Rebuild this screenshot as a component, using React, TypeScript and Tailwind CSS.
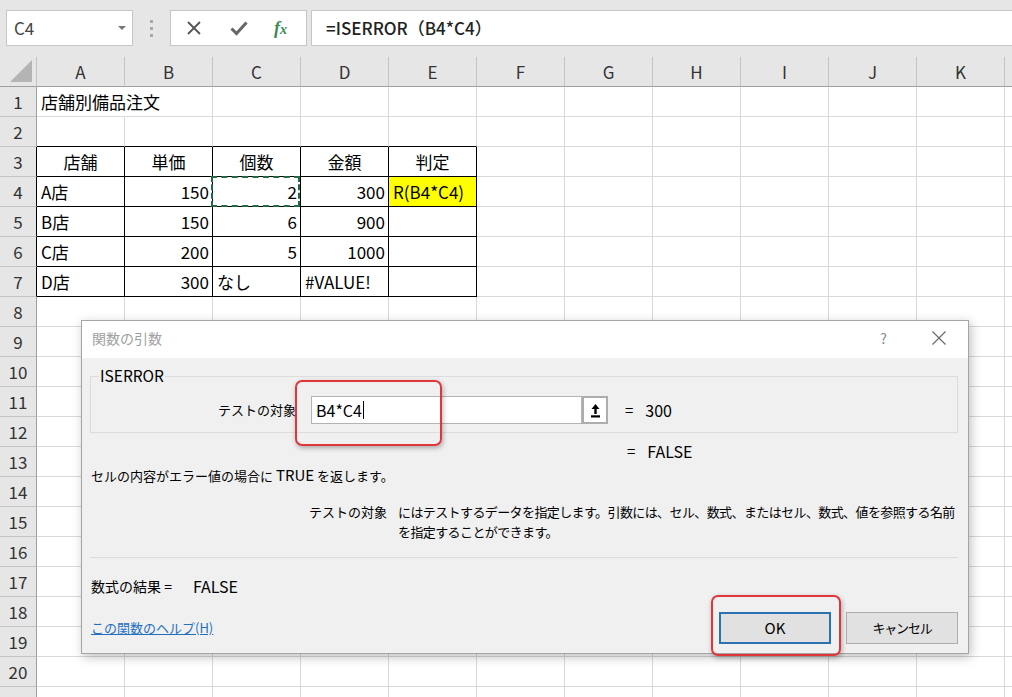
import { ReactNode } from "react";

const COLS = ["A", "B", "C", "D", "E", "F", "G", "H", "I", "J", "K", "L"];
const ROWS = Array.from({ length: 21 }, (_, i) => i + 1);

type Cell = { text: string; align: "l" | "r" | "c" };

const DATA: Record<string, Cell> = {
  A1: { text: "店舗別備品注文", align: "l" },
  A3: { text: "店舗", align: "c" },
  B3: { text: "単価", align: "c" },
  C3: { text: "個数", align: "c" },
  D3: { text: "金額", align: "c" },
  E3: { text: "判定", align: "c" },
  A4: { text: "A店", align: "l" },
  B4: { text: "150", align: "r" },
  C4: { text: "2", align: "r" },
  D4: { text: "300", align: "r" },
  E4: { text: "R(B4*C4)", align: "l" },
  A5: { text: "B店", align: "l" },
  B5: { text: "150", align: "r" },
  C5: { text: "6", align: "r" },
  D5: { text: "900", align: "r" },
  A6: { text: "C店", align: "l" },
  B6: { text: "200", align: "r" },
  C6: { text: "5", align: "r" },
  D6: { text: "1000", align: "r" },
  A7: { text: "D店", align: "l" },
  B7: { text: "300", align: "r" },
  C7: { text: "なし", align: "l" },
  D7: { text: "#VALUE!", align: "l" },
};

function SheetCell({ row, col }: { row: number; col: number }) {
  const key = COLS[col] + row;
  const cell = DATA[key];
  const inTable = col <= 4 && row >= 3 && row <= 7;
  const bottomBlack = col <= 4 && row >= 2 && row <= 7;
  const hideRight = key === "A1";

  const rightCls = hideRight
    ? "border-r-transparent"
    : inTable
    ? "border-r-black"
    : "border-r-[#d9d9d9]";
  const bottomCls = bottomBlack ? "border-b-black" : "border-b-[#d9d9d9]";
  const alignCls =
    cell?.align === "r"
      ? "justify-end pr-[3px]"
      : cell?.align === "c"
      ? "justify-center"
      : "justify-start pl-[4px]";

  return (
    <div
      className={`relative flex h-[30px] items-center border-r border-b text-[17px] leading-none text-black whitespace-nowrap ${rightCls} ${bottomCls} ${alignCls} ${
        key === "E4" ? "bg-[#ffff00]" : ""
      }`}
    >
      {cell && <span className="relative z-10">{cell.text}</span>}
      {key === "C4" && (
        <div className="absolute left-[-2px] top-[-1px] h-[31px] w-[89px] border-2 border-dashed border-[#1f6b45]" />
      )}
    </div>
  );
}

function RowHeader({ row }: { row: number }) {
  const black = row >= 3 && row <= 7;
  return (
    <div
      className={`flex h-[30px] items-center justify-center border-r border-b border-b-[#c4c4c4] bg-[#e6e6e6] text-[17px] leading-none text-[#333] ${
        black ? "border-r-black" : "border-r-[#9e9e9e]"
      }`}
    >
      {row}
    </div>
  );
}

function Toolbar() {
  return (
    <div className="flex h-[57px] items-start bg-[#e6e6e6] pt-[10px] pl-[6px]">
      <div className="flex h-[36px] w-[127px] items-center justify-between border border-[#c6c6c6] bg-white pl-[7px] pr-[6px] text-[17px] text-[#444]">
        <span>C4</span>
        <svg width="8" height="5" viewBox="0 0 8 5">
          <path d="M0 0h8L4 4z" fill="#777" />
        </svg>
      </div>
      <div className="ml-[17px] flex h-[36px] flex-col justify-center gap-[4px]">
        <span className="h-[3px] w-[3px] bg-[#a8a8a8]" />
        <span className="h-[3px] w-[3px] bg-[#a8a8a8]" />
        <span className="h-[3px] w-[3px] bg-[#a8a8a8]" />
      </div>
      <div className="ml-[17px] flex h-[36px] w-[137px] items-center border border-[#c6c6c6] bg-white">
        <svg className="ml-[15px]" width="16" height="16" viewBox="0 0 16 16">
          <path d="M2 2L14 14M14 2L2 14" stroke="#555" strokeWidth="1.8" />
        </svg>
        <svg className="ml-[28px]" width="18" height="16" viewBox="0 0 18 16">
          <path d="M1.5 8.5L6.5 13.5L16.5 2.5" stroke="#666" strokeWidth="3" fill="none" />
        </svg>
        <span className="ml-[26px] font-[family-name:'Liberation_Serif',serif] text-[18px] italic font-bold text-[#3c8a56]">
          f<span className="text-[14px]">x</span>
        </span>
      </div>
      <div className="ml-[4px] flex h-[36px] flex-1 items-center border border-r-0 border-[#c6c6c6] bg-white pl-[14px] text-[17px] font-medium text-[#222]">
        =ISERROR（B4*C4）
      </div>
    </div>
  );
}

function Sheet() {
  return (
    <div className="grid w-[1093px] grid-cols-[37px_repeat(12,88px)]">
      <div className="relative h-[30px] border-r border-b border-r-[#c4c4c4] border-b-[#9e9e9e] bg-[#e6e6e6]">
        <svg className="absolute right-[4px] bottom-[4px]" width="22" height="22" viewBox="0 0 22 22">
          <path d="M22 0V22H0z" fill="#b4b4b4" />
        </svg>
      </div>
      {COLS.map((c) => (
        <div
          key={c}
          className="flex h-[30px] items-center justify-center border-r border-b border-r-[#c4c4c4] border-b-[#9e9e9e] bg-[#e6e6e6] text-[17px] leading-none text-[#333]"
        >
          {c}
        </div>
      ))}
      {ROWS.map((r) => (
        <Row key={r} row={r} />
      ))}
    </div>
  );
}

function Row({ row }: { row: number }) {
  return (
    <>
      <RowHeader row={row} />
      {COLS.map((_, ci) => (
        <SheetCell key={ci} row={row} col={ci} />
      ))}
    </>
  );
}

function Button({ children, primary }: { children: ReactNode; primary?: boolean }) {
  return (
    <div
      className={`flex h-[32px] w-[112px] items-center justify-center bg-[#e1e1e1] text-[15px] text-black ${
        primary ? "border-2 border-[#2a73b0]" : "border border-[#adadad]"
      }`}
    >
      {children}
    </div>
  );
}

function Dialog() {
  return (
    <div className="absolute left-[81px] top-[320px] flex h-[334px] w-[888px] flex-col border border-[#a5a5a5] bg-[#f0f0f0] text-[13px] leading-[20px] text-black shadow-[2px_3px_10px_rgba(0,0,0,0.25)]">
      <div className="flex h-[37px] items-center justify-between bg-white pb-[3px] pl-[10px] pr-[21px]">
        <span className="text-[14px] text-[#a0a0a0]">関数の引数</span>
        <div className="flex items-center gap-[44px]">
          <span className="text-[14px] text-[#8a8a8a]">?</span>
          <svg width="16" height="16" viewBox="0 0 16 16">
            <path d="M1.5 1.5L14.5 14.5M14.5 1.5L1.5 14.5" stroke="#666" strokeWidth="1.1" />
          </svg>
        </div>
      </div>
      <div className="flex flex-col pl-[8px] pr-[10px]">
        <div className="relative mt-[18px] h-[57px] border border-[#dcdcdc]">
          <span className="absolute left-[8px] top-[-12px] bg-[#f0f0f0] px-[1px] text-[15.5px]">
            ISERROR
          </span>
          <div className="flex items-center pt-[19px]">
            <span className="w-[205px] text-right text-[13px]">テストの対象</span>
            <div className="ml-[15px] flex h-[28px] w-[271px] items-center border border-[#b4b4b4] bg-white pl-[4px] text-[16px]">
              B4*C4
              <span className="ml-[1px] h-[18px] w-[1px] bg-black" />
            </div>
            <div className="flex h-[28px] w-[26px] items-center justify-center border-2 border-[#adadad] bg-white">
              <svg width="11" height="15" viewBox="0 0 11 15">
                <path d="M5.5 1L1.5 6H4.3V11H6.7V6H9.5z" fill="#000" />
                <rect x="1" y="12.3" width="9" height="2.2" fill="#000" />
              </svg>
            </div>
            <span className="ml-[17px] text-[15px]">=</span>
            <span className="ml-[12px] text-[16px]">300</span>
          </div>
        </div>
        <div className="mt-[8px] flex pl-[537px] text-[16px]">
          <span className="text-[15px]">=</span>
          <span className="ml-[12px]">FALSE</span>
        </div>
        <div className="mt-[4px] pl-[1px]">
          セルの内容がエラー値の場合に <span className="text-[15px]">TRUE</span> を返します。
        </div>
        <div className="mt-[16px] flex">
          <span className="w-[308px] pl-[219px] whitespace-nowrap">テストの対象</span>
          <span className="whitespace-nowrap tracking-[-0.6px]">
            にはテストするデータを指定します。引数には、セル、数式、またはセル、数式、値を参照する名前
            <br />
            を指定することができます。
          </span>
        </div>
        <div className="mt-[15px] h-[1px] bg-[#dcdcdc]" />
        <div className="mt-[18px] flex items-center pl-[1px]">
          <span className="text-[14px]">数式の結果 =</span>
          <span className="ml-[21px] text-[16px]">FALSE</span>
        </div>
        <div className="mt-[16px] flex items-center">
          <span className="pl-[1px] text-[13px] text-[#1f6fbf] underline">この関数のヘルプ(H)</span>
          <div className="ml-auto flex gap-[15px]">
            <Button primary>OK</Button>
            <Button>
              <span className="text-[13px] tracking-[-1.2px]">キャンセル</span>
            </Button>
          </div>
        </div>
      </div>
    </div>
  );
}

export default function App() {
  return (
    <div className="relative h-[697px] w-[1012px] overflow-hidden bg-white font-[family-name:'Noto_Sans_CJK_JP','Noto_Sans',sans-serif]">
      <Toolbar />
      <Sheet />
      <Dialog />
      <div className="absolute left-[295px] top-[380px] h-[66px] w-[147px] rounded-[7px] border-2 border-[#e0353b] shadow-[1px_2px_5px_rgba(0,0,0,0.3)]" />
      <div className="absolute left-[711px] top-[595px] h-[61px] w-[130px] rounded-[7px] border-2 border-[#e0353b] shadow-[1px_2px_5px_rgba(0,0,0,0.3)]" />
    </div>
  );
}
